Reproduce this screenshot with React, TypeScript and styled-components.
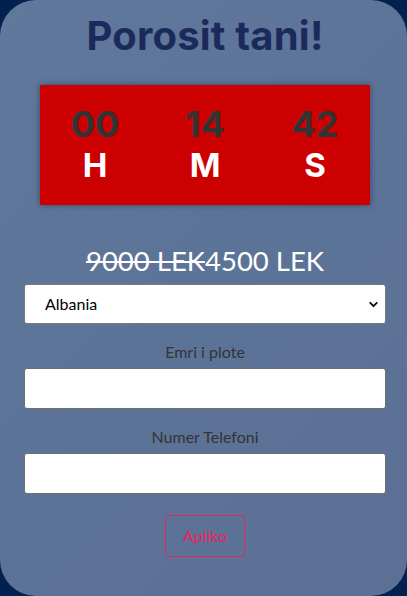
import { createGlobalStyle, styled } from "styled-components";
import { ChevronDown } from "lucide-react";

const GlobalStyle = createGlobalStyle`
  * { box-sizing: border-box; }
  html, body {
    margin: 0;
    padding: 0;
    background: #02214f;
  }
`;

const Card = styled.div`
  width: 407px;
  height: 596px;
  border-radius: 36px;
  background: linear-gradient(135deg, #60789b 0%, #5c7398 55%, #5c6f94 100%);
  display: flex;
  flex-direction: column;
  align-items: center;
  padding: 15.5px 21px 0 24px;
  font-family: Lato, "Open Sans", sans-serif;
`;

const Title = styled.h1`
  margin: 0;
  font-family: Inter, "Noto Sans", sans-serif;
  font-weight: 700;
  font-size: 40px;
  line-height: 1;
  color: #1c2a5b;
  letter-spacing: 0.2px;
`;

const Timer = styled.div`
  margin-top: 29.5px;
  width: 330px;
  height: 120px;
  background: #cc0000;
  box-shadow: 0 0 6px rgba(20, 30, 60, 0.55);
  display: grid;
  grid-template-columns: repeat(3, 1fr);
  padding-top: 21px;
`;

const Unit = styled.div`
  display: flex;
  flex-direction: column;
  align-items: center;
  font-family: Inter, "Noto Sans", sans-serif;
  font-weight: 700;
  line-height: 1;
`;

const Digits = styled.span`
  font-size: 36px;
  color: #333333;
`;

const Letter = styled.span`
  margin-top: 6.5px;
  font-size: 33px;
  color: #ffffff;
`;

const Price = styled.div`
  margin-top: 41.5px;
  font-size: 27.5px;
  line-height: 1;
  color: #ffffff;
`;

const OldPrice = styled.s`
  text-decoration-thickness: 2px;
`;

const SelectWrap = styled.div`
  position: relative;
  margin-top: 9.5px;
  width: 100%;
`;

const Select = styled.select`
  appearance: none;
  width: 100%;
  height: 40px;
  border: 1px solid #7a7a7a;
  border-radius: 3px;
  background: #ffffff;
  padding: 0 20px;
  font-family: Lato, "Open Sans", sans-serif;
  font-size: 16px;
  color: #000000;
`;

const Arrow = styled.span`
  position: absolute;
  right: 6px;
  top: 14px;
  display: flex;
  color: #111111;
  pointer-events: none;
`;

const Label = styled.label`
  margin-top: 20px;
  font-size: 16px;
  line-height: 1;
  color: #333333;
`;

const Input = styled.input`
  margin-top: 8px;
  width: 100%;
  height: 41px;
  border: 1px solid #6f6f6f;
  border-radius: 3px;
  background: #ffffff;
`;

const Button = styled.button`
  margin-top: 21px;
  height: 42px;
  padding: 0 16.5px;
  background: transparent;
  border: 1px solid #e8245f;
  border-radius: 3px;
  color: #e8245f;
  font-family: Lato, "Open Sans", sans-serif;
  font-size: 16px;
`;

const units = [
  { value: "00", label: "H" },
  { value: "14", label: "M" },
  { value: "42", label: "S" },
];

export default function App() {
  return (
    <>
      <GlobalStyle />
      <Card>
        <Title>Porosit tani!</Title>
        <Timer>
          {units.map((u) => (
            <Unit key={u.label}>
              <Digits>{u.value}</Digits>
              <Letter>{u.label}</Letter>
            </Unit>
          ))}
        </Timer>
        <Price>
          <OldPrice>9000 LEK</OldPrice>4500 LEK
        </Price>
        <SelectWrap>
          <Select defaultValue="Albania">
            <option>Albania</option>
            <option>Kosova</option>
          </Select>
          <Arrow>
            <ChevronDown size={13} strokeWidth={3.5} />
          </Arrow>
        </SelectWrap>
        <Label>Emri i plote</Label>
        <Input type="text" />
        <Label>Numer Telefoni</Label>
        <Input type="tel" />
        <Button>Apliko</Button>
      </Card>
    </>
  );
}
